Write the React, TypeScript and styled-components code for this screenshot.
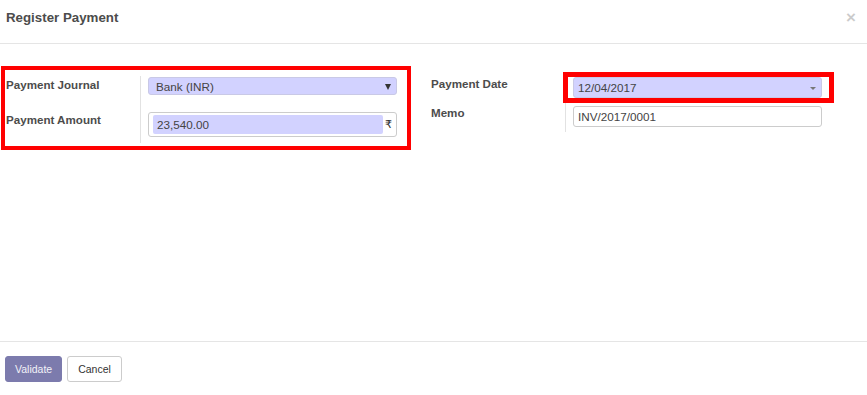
import React from "react";
import styled, { createGlobalStyle } from "styled-components";

const Global = createGlobalStyle`
  html, body { margin: 0; padding: 0; background: #fff; }
  body { font-family: "Liberation Sans", Arial, sans-serif; color: #4c4c4c; }
  * { box-sizing: border-box; }
`;

const Modal = styled.div`
  width: 867px;
  height: 395px;
  display: flex;
  flex-direction: column;
  background: #fff;
`;

const Header = styled.div`
  height: 44px;
  border-bottom: 1px solid #e5e5e5;
  display: flex;
  justify-content: space-between;
  align-items: flex-start;
  padding: 10px 11px 0 6px;
`;

const Title = styled.h4`
  margin: 0;
  font-size: 13.3px;
  line-height: 16px;
  font-weight: bold;
  color: #4c4c4c;
`;

const Close = styled.span`
  font-size: 17px;
  line-height: 16px;
  font-weight: bold;
  color: #000;
  opacity: 0.2;
`;

const Body = styled.div`
  flex: 1;
  display: flex;
  align-items: flex-start;
  padding: 22px 0 0 1px;
`;

const Group = styled.div<{ $framed?: boolean }>`
  display: grid;
  grid-template-columns: 136px 266px;
  grid-template-rows: ${(p) => (p.$framed ? "35px 32px" : "29px 28px")};
  ${(p) =>
    p.$framed
      ? `border: 4px solid #ff0000; padding: 6px 0 3px 0; width: 410px;`
      : `margin: 9px 0 0 19px;`}
`;

const Label = styled.div`
  border-right: 1px solid #e2e2e2;
  padding: 1px 0 0 1px;
  font-size: 11.6px;
  line-height: 16px;
  font-weight: bold;
  color: #4c4c4c;
`;

const Field = styled.div<{ $pt?: number }>`
  padding: ${(p) => p.$pt ?? 1}px 10px 0 7px;
`;

const SelectBox = styled.div<{ $h: number }>`
  position: relative;
  height: ${(p) => p.$h}px;
  background: #d2d2ff;
  border: 1px solid #c9c9e6;
  border-radius: 3px;
  display: flex;
  align-items: center;
  justify-content: space-between;
  font-size: 11.7px;
  color: #444;
`;

const SelectText = styled.span<{ $pl: number }>`
  padding-left: ${(p) => p.$pl}px;
`;

const BlackArrow = styled.span`
  width: 0;
  height: 0;
  border-left: 3.5px solid transparent;
  border-right: 3.5px solid transparent;
  border-top: 6px solid #333;
  margin-right: 5px;
  margin-top: 1px;
`;

const GrayCaret = styled.span`
  width: 0;
  height: 0;
  border-left: 3px solid transparent;
  border-right: 3px solid transparent;
  border-top: 3px solid #777;
  margin-right: 5px;
  margin-top: 1px;
`;

const RedFrame = styled.div`
  position: absolute;
  top: -6px;
  bottom: -6px;
  left: -11px;
  right: -13px;
  border: 5px solid #ff0000;
  pointer-events: none;
`;

const MonetaryBox = styled.div`
  height: 25px;
  border: 1px solid #ccc;
  border-radius: 3px;
  display: flex;
  align-items: center;
  padding: 2px 2px 2px 4px;
  background: #fff;
`;

const MonetaryInput = styled.div`
  flex: 1;
  height: 19px;
  background: #d2d2ff;
  border-radius: 2px;
  display: flex;
  align-items: center;
  padding-left: 4px;
  font-size: 11.7px;
  color: #444;
`;

const Currency = styled.span`
  width: 11px;
  text-align: center;
  font-size: 11px;
  color: #333;
  font-family: "DejaVu Sans", sans-serif;
`;

const TextInput = styled.div`
  height: 21px;
  border: 1px solid #ccc;
  border-radius: 3px;
  display: flex;
  align-items: center;
  padding-left: 4px;
  font-size: 11.7px;
  color: #444;
`;

const Footer = styled.div`
  height: 54px;
  border-top: 1px solid #e5e5e5;
  display: flex;
  align-items: flex-start;
  gap: 5px;
  padding: 14px 0 0 5px;
`;

const Button = styled.button<{ $primary?: boolean }>`
  height: 26px;
  padding: 0 ${(p) => (p.$primary ? "9px" : "10px")};
  border-radius: 3px;
  font-family: "Liberation Sans", Arial, sans-serif;
  font-size: 10.5px;
  border: 1px solid ${(p) => (p.$primary ? "#7c7bad" : "#ccc")};
  background: ${(p) => (p.$primary ? "#7c7bad" : "#fff")};
  color: ${(p) => (p.$primary ? "#f2f2f8" : "#333")};
`;

export default function App() {
  return (
    <>
      <Global />
      <Modal>
        <Header>
          <Title>Register Payment</Title>
          <Close>×</Close>
        </Header>
        <Body>
          <Group $framed>
            <Label>Payment Journal</Label>
            <Field>
              <SelectBox $h={18}>
                <SelectText $pl={7}>Bank (INR)</SelectText>
                <BlackArrow />
              </SelectBox>
            </Field>
            <Label>Payment Amount</Label>
            <Field>
              <MonetaryBox>
                <MonetaryInput>23,540.00</MonetaryInput>
                <Currency>₹</Currency>
              </MonetaryBox>
            </Field>
          </Group>
          <Group>
            <Label>Payment Date</Label>
            <Field $pt={2}>
              <SelectBox $h={21}>
                <SelectText $pl={4}>12/04/2017</SelectText>
                <GrayCaret />
                <RedFrame />
              </SelectBox>
            </Field>
            <Label>Memo</Label>
            <Field $pt={2}>
              <TextInput>INV/2017/0001</TextInput>
            </Field>
          </Group>
        </Body>
        <Footer>
          <Button $primary>Validate</Button>
          <Button>Cancel</Button>
        </Footer>
      </Modal>
    </>
  );
}
